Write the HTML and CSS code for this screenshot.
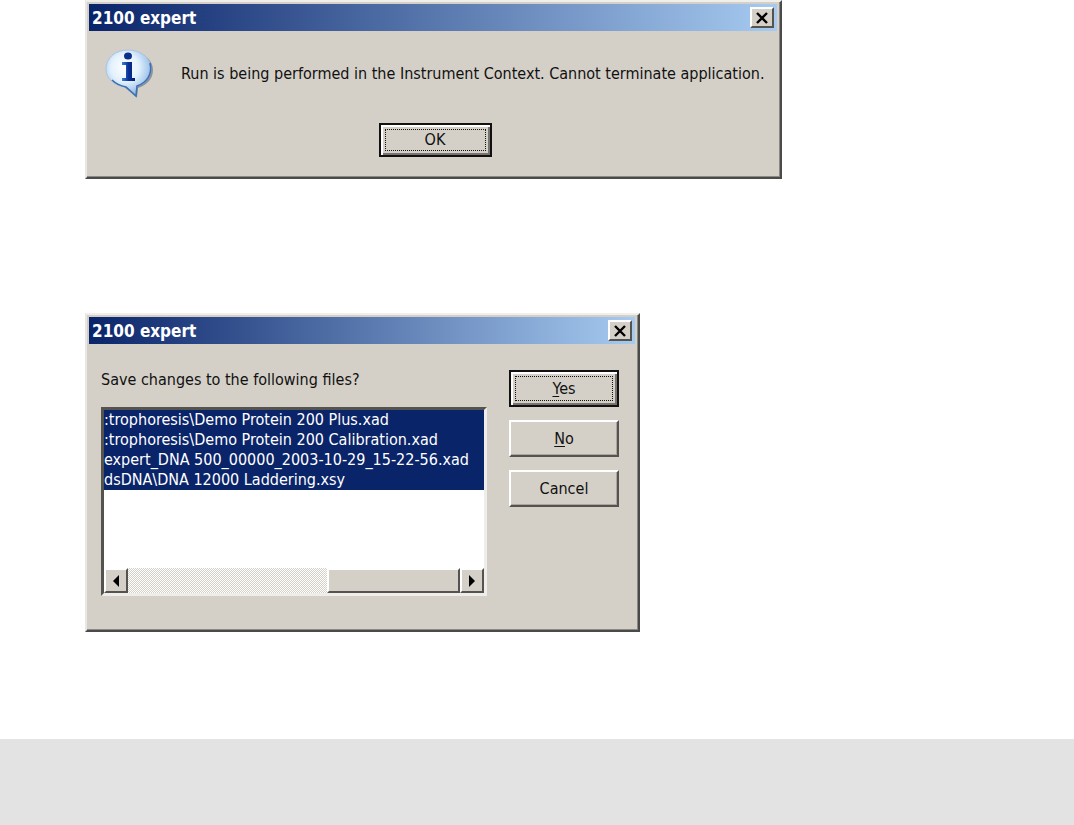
FILE: index.html
```html
<!DOCTYPE html>
<html lang="en">
<head>
  <meta charset="UTF-8">
  <title>2100 expert</title>
  <link rel="stylesheet" href="styles.css">
</head>
<body>
  <main class="page">
    <section class="dialog dialog-info" role="alertdialog" aria-labelledby="infoTitle" aria-describedby="infoText">
      <header class="title-bar">
        <h2 id="infoTitle">2100 expert</h2>
        <button type="button" class="close" aria-label="Close">
          <svg width="14" height="12" viewBox="0 0 14 12"><path d="M2 1l10 10M12 1L2 11" stroke="#000" stroke-width="2.4"/></svg>
        </button>
      </header>
      <div class="info-body">
        <div class="message">
          <svg class="info-icon" width="48" height="50" viewBox="0 0 48 50">
            <defs>
              <radialGradient id="bubble" cx="42%" cy="38%" r="62%">
                <stop offset="0" stop-color="#fff"/>
                <stop offset="0.5" stop-color="#e3f1fd"/>
                <stop offset="1" stop-color="#8fb8e6"/>
              </radialGradient>
              <linearGradient id="letter" x1="0" x2="1">
                <stop offset="0" stop-color="#3f7fd8"/>
                <stop offset="0.5" stop-color="#0a2f96"/>
                <stop offset="1" stop-color="#061f70"/>
              </linearGradient>
            </defs>
            <path d="M26 3C39 3 48 11 48 21c0 9-6 15-15 18l-1 9-13-10C10 36 4 30 4 21 4 11 13 3 26 3z" fill="#6d7888" opacity="0.7"/>
            <path d="M23 1C36 1 46 9 46 20c0 9-6 15-14 17l-1 10-10-9C9 37 1 29 1 20 1 9 10 1 23 1z" fill="url(#bubble)" stroke="#a9c3e0"/>
            <path d="M45 14c3 12-4 20-13 23l-1 10-10-9C16 37 11 35 7 31" fill="none" stroke="#3d70b0" stroke-width="1.6"/>
            <ellipse cx="23" cy="7" rx="4" ry="3.5" fill="#0a2f8a"/>
            <path d="M17 13h10v16h3v3H17v-3h4V16h-4z" fill="url(#letter)"/>
          </svg>
          <p id="infoText">Run is being performed in the Instrument Context. Cannot terminate application.</p>
        </div>
        <button type="button" class="button button-default button-ok"><span class="focus">OK</span></button>
      </div>
    </section>

    <section class="dialog dialog-save" role="dialog" aria-labelledby="saveTitle">
      <header class="title-bar">
        <h2 id="saveTitle">2100 expert</h2>
        <button type="button" class="close" aria-label="Close">
          <svg width="14" height="12" viewBox="0 0 14 12"><path d="M2 1l10 10M12 1L2 11" stroke="#000" stroke-width="2.4"/></svg>
        </button>
      </header>
      <form class="save-body">
        <div class="files">
          <label for="files">Save changes to the following files?</label>
          <div class="list-box">
            <select id="files" multiple>
              <option selected>:trophoresis\Demo Protein 200 Plus.xad</option>
              <option selected>:trophoresis\Demo Protein 200 Calibration.xad</option>
              <option selected>expert_DNA 500_00000_2003-10-29_15-22-56.xad</option>
              <option selected>dsDNA\DNA 12000 Laddering.xsy</option>
            </select>
            <div class="scrollbar">
              <button type="button" class="scroll-button" aria-label="Scroll left">
                <svg width="6" height="12" viewBox="0 0 6 12"><path d="M6 0v12L0 6z"/></svg>
              </button>
              <div class="track"><div class="thumb"></div></div>
              <button type="button" class="scroll-button" aria-label="Scroll right">
                <svg width="6" height="12" viewBox="0 0 6 12"><path d="M0 0v12l6-6z"/></svg>
              </button>
            </div>
          </div>
        </div>
        <div class="actions">
          <button type="button" class="button button-default"><span class="focus"><span><u>Y</u>es</span></span></button>
          <button type="button" class="button"><span><u>N</u>o</span></button>
          <button type="button" class="button">Cancel</button>
        </div>
      </form>
    </section>
  </main>
  <footer class="page-footer"></footer>
</body>
</html>
```
FILE: styles.css
```css
* {
  box-sizing: border-box;
}
body {
  display: flex;
  flex-direction: column;
  min-height: 100vh;
  margin: 0;
  background: #fff;
  color: #111;
  font-family: Tahoma, "DejaVu Sans Condensed", "DejaVu Sans", sans-serif;
  font-size: 16px;
  line-height: 20px;
}
.page {
  flex: 1;
  display: flex;
  flex-direction: column;
  gap: 134px;
  padding: 0 85px;
}
.page-footer {
  height: 86px;
  background: #e3e3e3;
}

/* windows */
.dialog {
  width: 100%;
  padding: 2px 3px 2px 2px;
  background: #d4d0c8;
  border: 2px solid;
  border-color: #f1efec #4a4a4a #4a4a4a #e9e7e3;
  box-shadow: inset -1px -1px #8c8983;
}
.dialog-info {
  max-width: 697px;
}
.dialog-save {
  max-width: 555px;
}
.title-bar {
  display: flex;
  align-items: center;
  justify-content: space-between;
  height: 27px;
  padding: 0 3px;
  background: linear-gradient(to right, #0a246a, #a6caf0);
}
.title-bar h2 {
  margin: 0;
  color: #fff;
  font-size: 17px;
}

/* buttons */
button {
  padding: 0;
  background: #d4d0c8;
  color: #111;
  font: inherit;
  border: 2px solid;
  border-color: #fff #55534f #55534f #fff;
}
.close {
  display: flex;
  align-items: center;
  justify-content: center;
  width: 24px;
  height: 21px;
}
.button {
  display: flex;
  align-items: center;
  justify-content: center;
  width: 110px;
  height: 37px;
  box-shadow: inset -1px -1px #aaa69f;
}
.button-default {
  padding: 4px;
  border-color: #111;
  box-shadow: inset 2px 2px #fff, inset -2px -2px #77746f;
}
.button-ok {
  width: 113px;
  height: 34px;
}
.focus {
  display: flex;
  align-items: center;
  justify-content: center;
  width: 100%;
  height: 100%;
  border: 1px dotted #111;
}
u {
  text-underline-offset: 2px;
}

/* message */
.info-body {
  display: flex;
  flex-direction: column;
  align-items: center;
  gap: 24px;
  padding: 18px 12px 18px 16px;
}
.message {
  display: flex;
  align-items: center;
  gap: 28px;
  width: 100%;
}
.message p {
  margin: 0;
}
.info-icon {
  flex: none;
}

/* save changes */
.save-body {
  display: flex;
  gap: 22px;
  padding: 26px 16px 32px 12px;
}
.files {
  flex: 1;
  display: flex;
  flex-direction: column;
  gap: 17px;
  min-width: 0;
}
.list-box {
  height: 189px;
  display: flex;
  flex-direction: column;
  background: #fff;
  border: 3px solid;
  border-color: #55534f #efedea #efedea #55534f;
}
select {
  flex: 1;
  width: 100%;
  min-height: 0;
  padding: 0;
  border: 0;
  border-radius: 0;
  outline: 0;
  background: #fff;
  font: inherit;
  overflow: hidden;
}
option {
  min-height: 20px;
  padding: 0;
  line-height: 20px;
}
option:checked {
  background: linear-gradient(#0a246a, #0a246a);
  -webkit-text-fill-color: #fff;
}
.scrollbar {
  display: flex;
  height: 25px;
}
.scroll-button {
  display: flex;
  align-items: center;
  justify-content: center;
  width: 24px;
}
.track {
  flex: 1;
  display: flex;
  justify-content: flex-end;
  background: repeating-conic-gradient(#d4d0c8 0 25%, #fff 0 50%) 0 0 / 2px 2px;
}
.thumb {
  width: 133px;
  background: #d4d0c8;
  border: 2px solid;
  border-color: #fff #55534f #55534f #fff;
}
.actions {
  display: flex;
  flex-direction: column;
  gap: 13px;
}
```
